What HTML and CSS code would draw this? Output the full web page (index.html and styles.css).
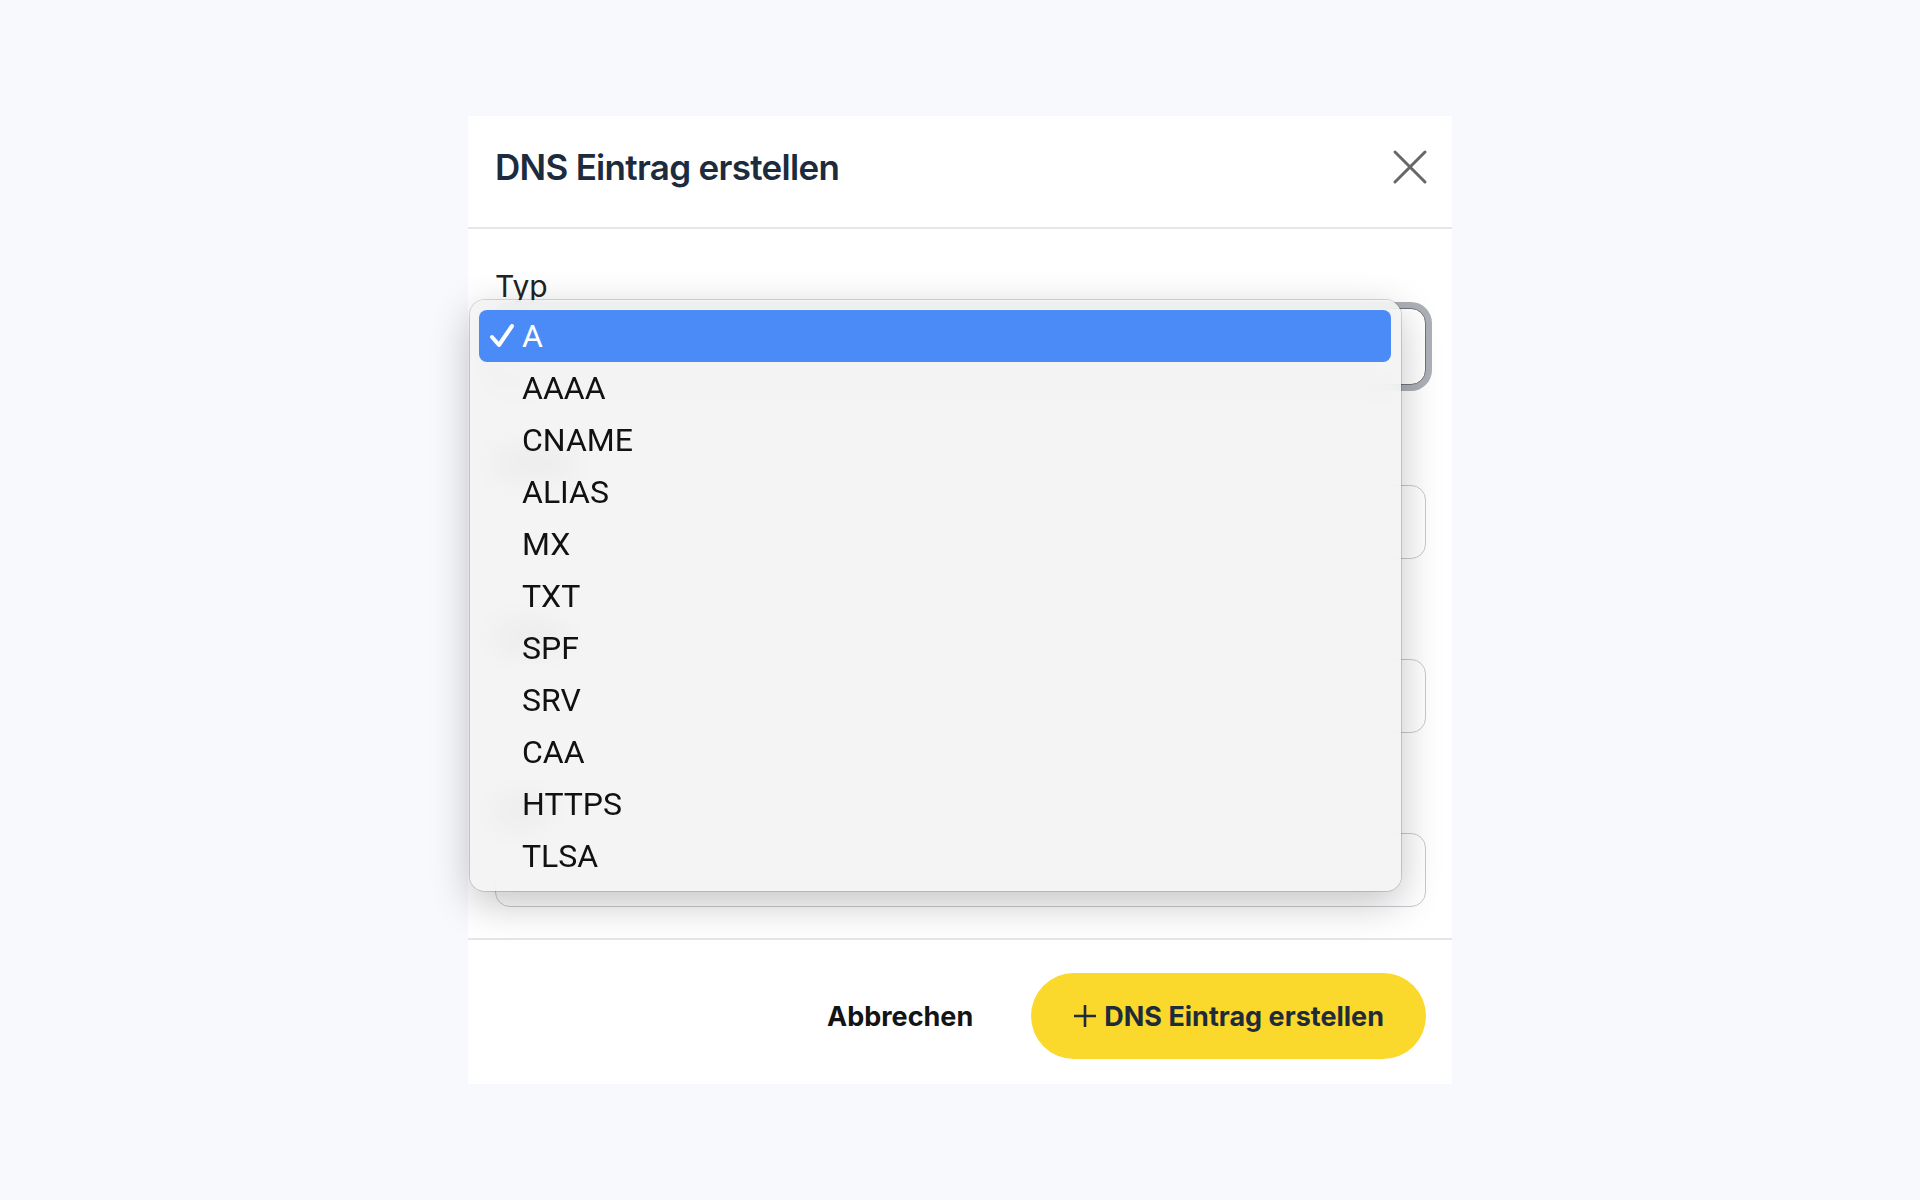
FILE: index.html
```html
<!DOCTYPE html>
<html lang="de">
<head>
<meta charset="utf-8">
<title>DNS Eintrag erstellen</title>
<link rel="stylesheet" href="styles.css">
</head>
<body>
<div class="modal">
  <div class="modal-header">
    <h2 class="modal-title">DNS Eintrag erstellen</h2>
    <button class="close-btn" aria-label="Schließen">
      <svg width="36" height="36" viewBox="0 0 36 36"><path d="M3 3 L33 33 M33 3 L3 33" stroke="#676767" stroke-width="3" stroke-linecap="round" fill="none"/></svg>
    </button>
  </div>
  <div class="modal-body">
    <div class="field">
      <label class="field-label">Typ</label>
      <div class="select-box focused"></div>
    </div>
    <div class="field">
      <div class="field-label ghost"><span class="ghost-text w1"></span></div>
      <div class="input-box"></div>
    </div>
    <div class="field">
      <div class="field-label ghost"><span class="ghost-text w2"></span></div>
      <div class="input-box"></div>
    </div>
    <div class="field">
      <div class="field-label ghost"><span class="ghost-text w3"></span></div>
      <div class="input-box"></div>
    </div>

    <ul class="dropdown">
      <li class="option selected">
        <svg class="check" width="26" height="26" viewBox="0 0 26 26"><path d="M3 14 L10 22 L23 3" stroke="#fff" stroke-width="4" stroke-linecap="round" stroke-linejoin="round" fill="none"/></svg>
        <span>A</span>
      </li>
      <li class="option"><span>AAAA</span></li>
      <li class="option"><span>CNAME</span></li>
      <li class="option"><span>ALIAS</span></li>
      <li class="option"><span>MX</span></li>
      <li class="option"><span>TXT</span></li>
      <li class="option"><span>SPF</span></li>
      <li class="option"><span>SRV</span></li>
      <li class="option"><span>CAA</span></li>
      <li class="option"><span>HTTPS</span></li>
      <li class="option"><span>TLSA</span></li>
    </ul>
  </div>
  <div class="modal-footer">
    <button class="btn-cancel">Abbrechen</button>
    <button class="btn-primary">
      <svg width="24" height="24" viewBox="0 0 24 24"><path d="M12 1 V23 M1 12 H23" stroke="#1e2b3b" stroke-width="2.6" fill="none"/></svg>
      <span>DNS Eintrag erstellen</span>
    </button>
  </div>
</div>
</body>
</html>
```

FILE: styles.css
```css
* { box-sizing: border-box; }

html, body {
  margin: 0;
  padding: 0;
}

body {
  background: #f8f9fc;
  font-family: Inter, "Noto Sans", sans-serif;
  min-height: 1200px;
}

.modal {
  width: 984px;
  margin: 116px auto 0;
  background: #ffffff;
}

.modal-header {
  height: 113px;
  display: flex;
  align-items: center;
  justify-content: space-between;
  padding: 0 26px 9px 27px;
  border-bottom: 2px solid #e4e6e9;
}

.modal-title {
  margin: 0;
  font-size: 35px;
  font-weight: 600;
  letter-spacing: -0.7px;
  color: #1c2b3d;
}

.close-btn {
  background: none;
  border: 0;
  padding: 0;
  width: 36px;
  height: 36px;
  display: flex;
  margin-right: -2px;
}

.modal-body {
  position: relative;
  padding: 39px 26px 31px 27px;
  display: flex;
  flex-direction: column;
  gap: 60px;
}

.field {
  display: flex;
  flex-direction: column;
  gap: 4px;
}

.field-label {
  font-size: 30px;
  line-height: 36px;
  height: 36px;
  color: #222222;
}

.ghost {
  display: flex;
  align-items: center;
}

.ghost-text {
  display: block;
  height: 22px;
  border-radius: 6px;
  background: #9a9a9a;
}

.ghost-text.w1 { width: 78px; }
.ghost-text.w2 { width: 70px; }
.ghost-text.w3 { width: 52px; }

.select-box {
  height: 77px;
  border: 1px solid #70757c;
  border-radius: 15px;
  background: #ffffff;
}

.select-box.focused {
  box-shadow: 0 0 0 6px #adb1b7;
}

.input-box {
  height: 74px;
  border: 1px solid #c6cad0;
  border-radius: 15px;
  background: #ffffff;
}

.dropdown {
  position: absolute;
  left: 2px;
  top: 71px;
  width: 931px;
  height: 591px;
  margin: 0;
  padding: 10px 10px 9px 9px;
  list-style: none;
  background: rgba(243, 243, 243, 0.88);
  backdrop-filter: blur(16px);
  border-radius: 15px;
  box-shadow: 0 0 0 1px rgba(0, 0, 0, 0.15), 0 12px 40px rgba(0, 0, 0, 0.24);
  font-family: Roboto, "Liberation Sans", sans-serif;
}

.option {
  height: 52px;
  display: flex;
  align-items: center;
  padding-left: 43px;
  font-size: 32px;
  color: #111111;
  border-radius: 8px;
  position: relative;
}

.option.selected {
  background: #4a8bf7;
  color: #ffffff;
}

.check {
  position: absolute;
  left: 10px;
  top: 13px;
}

.modal-footer {
  display: flex;
  justify-content: flex-end;
  align-items: center;
  gap: 58px;
  padding: 33px 26px 25px;
  border-top: 2px solid #e4e6e9;
}

.btn-cancel {
  background: none;
  border: 0;
  padding: 0;
  font-family: Inter, "Noto Sans", sans-serif;
  font-size: 27px;
  font-weight: 700;
  letter-spacing: 0;
  color: #141414;
}

.btn-primary {
  height: 86px;
  padding: 0 42px 0 42px;
  border: 0;
  border-radius: 43px;
  background: #fad82c;
  display: flex;
  align-items: center;
  gap: 7px;
  font-family: Inter, "Noto Sans", sans-serif;
  font-size: 27px;
  font-weight: 700;
  letter-spacing: 0;
  color: #1e2b3b;
}
```
